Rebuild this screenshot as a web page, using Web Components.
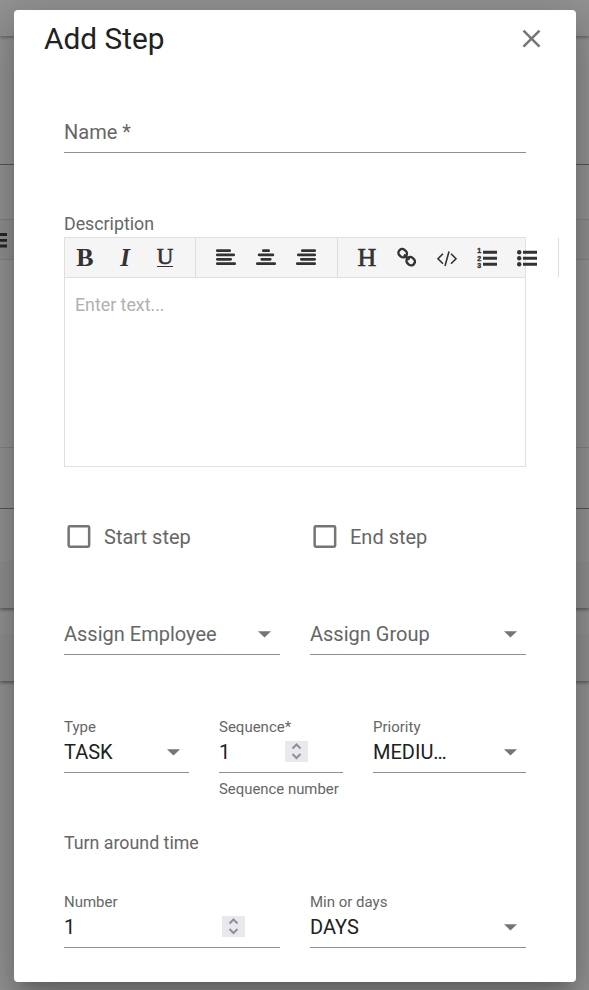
<!DOCTYPE html>
<html lang="en">
<head>
<meta charset="utf-8">
<title>Add Step</title>
<style>
  body {
    margin: 0;
    height: 990px;
    overflow: hidden;
    background: #939393;
    font-family: Roboto, "Liberation Sans", sans-serif;
    color: #212121;
  }
</style>
</head>
<body>
<page-backdrop></page-backdrop>
<step-dialog heading="Add Step">
  <form-field class="name" placeholder="Name *"></form-field>
  <text-editor label="Description" placeholder="Enter text..."></text-editor>
  <form-row class="checks">
    <check-box>Start step</check-box>
    <check-box>End step</check-box>
  </form-row>
  <form-row class="assign">
    <form-field placeholder="Assign Employee" control="select"></form-field>
    <form-field placeholder="Assign Group" control="select"></form-field>
  </form-row>
  <form-row class="details" columns="125px 124px 153px">
    <form-field label="Type" value="TASK" control="select"></form-field>
    <form-field label="Sequence*" value="1" control="number" hint="Sequence number"></form-field>
    <form-field label="Priority" value="MEDIU…" control="select"></form-field>
  </form-row>
  <section-label>Turn around time</section-label>
  <form-row class="duration">
    <form-field label="Number" value="1" control="number"></form-field>
    <form-field label="Min or days" value="DAYS" control="select"></form-field>
  </form-row>
</step-dialog>

<script>
class PageBackdrop extends HTMLElement {
    constructor() {
        super();
        this.attachShadow({ mode: 'open' });
        this.shadowRoot.innerHTML = `
        <style>
          :host { display: flex; flex-direction: column; height: 990px; }
          div { box-sizing: border-box; flex: none; }
          .bar { height: 36px; background: #929292; box-shadow: 0 1px 4px rgba(0,0,0,.4); }
          .top { height: 129px; border-bottom: 1px solid #555; }
          .gap { height: 54px; }
          .tools { height: 41px; background: #8f8f8f; border: solid #828282; border-width: 1px 0; }
          .tools svg { display: block; margin-top: 13px; }
          .area { height: 188px; border-bottom: 1px solid #828282; }
          .line { height: 61px; border-bottom: 1px solid #555; }
          .panel { background: #8f8f8f; box-shadow: 0 2px 3px rgba(0,0,0,.35); clip-path: inset(0 0 -6px 0); }
        </style>
        <div class="bar"></div>
        <div class="top"></div>
        <div class="gap"></div>
        <div class="tools">
          <svg width="7" height="15"><path d="M0 1.500h7M0 7.300h7M0 13h7" stroke="#262626" stroke-width="2.800"/></svg>
        </div>
        <div class="area"></div>
        <div class="line"></div>
        <div class="panel" style="height:47px;margin-top:52px"></div>
        <div class="panel" style="height:47px;margin-top:26px"></div>
      `;
    }
}

class StepDialog extends HTMLElement {
    constructor() {
        super();
        this.attachShadow({ mode: 'open' });
        this.shadowRoot.innerHTML = `
        <style>
          :host {
            position: absolute;
            left: 14px;
            top: 10px;
            width: 562px;
            height: 972px;
            box-sizing: border-box;
            background: #fff;
            border-radius: 4px;
            box-shadow: 0 11px 15px -7px rgba(0,0,0,.2),
                        0 24px 38px 3px rgba(0,0,0,.14),
                        0 9px 46px 8px rgba(0,0,0,.12);
          }
          header {
            display: flex;
            align-items: center;
            justify-content: space-between;
            height: 58px;
            padding: 0 35px 0 30px;
          }
          h1 { margin: 0; font-size: 29.8px; line-height: 40px; font-weight: 400; }
          main { display: flex; flex-direction: column; padding: 50px 50px 0; }
          ::slotted(text-editor) { margin-top: 59px; }
          ::slotted(.checks) { margin-top: 57px; }
          ::slotted(.assign) { margin-top: 70px; }
          ::slotted(.details) { margin-top: 63px; }
          ::slotted(section-label) { margin-top: 33px; }
          ::slotted(.duration) { margin-top: 38px; }
        </style>
        <header>
          <h1></h1>
          <svg width="20" height="20" viewBox="0 0 20 20"><path d="M2.500 1.700l16 16M18.500 1.700l-16 16" stroke="#757575" stroke-width="2.500"/></svg>
        </header>
        <main><slot></slot></main>
      `;
    }

    connectedCallback() {
        this.shadowRoot.querySelector('h1').textContent = this.getAttribute('heading');
    }
}

class FormRow extends HTMLElement {
    constructor() {
        super();
        this.attachShadow({ mode: 'open' });
        this.shadowRoot.innerHTML = `
        <style>
          :host {
            display: grid;
            grid-template-columns: var(--columns, 216px 216px);
            column-gap: 30px;
            align-items: start;
          }
        </style>
        <slot></slot>
      `;
    }

    connectedCallback() {
        const columns = this.getAttribute('columns');
        if (columns) this.style.setProperty('--columns', columns);
    }
}

class FormField extends HTMLElement {
    constructor() {
        super();
        this.attachShadow({ mode: 'open' });
    }

    connectedCallback() {
        const label = this.getAttribute('label');
        const value = this.getAttribute('value');
        const hint = this.getAttribute('hint');
        const controls = {
            select: '<svg class="arrow" width="13" height="8"><path d="M0 1.200h13L6.500 7.600z" fill="#757575"/></svg>',
            number: `<svg class="spin" width="23" height="21">
              <path d="M7.500 7.500l4-4 4 4M7.500 13l4 4 4-4" fill="none" stroke="#908f9c" stroke-width="2"/></svg>`
        };

        this.shadowRoot.innerHTML = `
        <style>
          :host { display: block; }
          .label, .hint { font-size: 15px; line-height: 18px; color: #666; white-space: nowrap; }
          .label { margin-bottom: 2px; }
          .hint { margin-top: 7px; font-size: 14.9px; }
          .control {
            display: flex;
            align-items: center;
            justify-content: space-between;
            height: 28px;
            padding-bottom: 6px;
            border-bottom: 1px solid #8f8f8f;
            font-size: 20px;
            line-height: 28px;
            white-space: nowrap;
          }
          .placeholder { color: #666; }
          .arrow { margin-right: 9px; }
          .spin { margin: 0 35px 1px 0; background: #e9e8ed; }
        </style>
        ${label ? `<div class="label">${label}</div>` : ''}
        <div class="control">
          <span class="${value ? 'value' : 'placeholder'}">${value || this.getAttribute('placeholder')}</span>
          ${controls[this.getAttribute('control')] || ''}
        </div>
        ${hint ? `<div class="hint">${hint}</div>` : ''}
      `;
    }
}

class CheckBox extends HTMLElement {
    constructor() {
        super();
        this.attachShadow({ mode: 'open' });
        this.shadowRoot.innerHTML = `
        <style>
          :host {
            display: flex;
            align-items: center;
            gap: 13px;
            height: 26px;
            padding-left: 3px;
            font-size: 20px;
            color: #666;
          }
          svg { margin-bottom: 1px; }
        </style>
        <svg width="24" height="23"><rect x="1.650" y="1.250" width="20.500" height="20.500" rx="1.200" fill="none" stroke="#757575" stroke-width="2.500"/></svg>
        <slot></slot>
      `;
    }
}

class SectionLabel extends HTMLElement {
    constructor() {
        super();
        this.attachShadow({ mode: 'open' });
        this.shadowRoot.innerHTML = `
        <style>
          :host { display: block; font-size: 17.8px; line-height: 24px; color: #666; }
        </style>
        <slot></slot>
      `;
    }
}

class TextEditor extends HTMLElement {
    constructor() {
        super();
        this.attachShadow({ mode: 'open' });
        this.shadowRoot.innerHTML = `
        <style>
          :host { display: block; }
          .label { font-size: 17.8px; line-height: 24px; color: #666; margin-bottom: 1px; }
          .editor { box-sizing: border-box; height: 230px; border: 1px solid #e0e0e0; }
          /* the last group runs past the right border of the bar */
          .bar { display: flex; height: 39px; background: #f5f5f5; border-bottom: 1px solid #e0e0e0; }
          .group { display: flex; flex: none; border-right: 1px solid #ddd; }
          .group:nth-child(1) { padding-right: 10px; }
          .group:nth-child(2) { padding: 0 11px 0 10px; }
          .group:nth-child(3) { padding: 0 11px 0 9px; }
          .group > * {
            display: flex;
            align-items: center;
            justify-content: center;
            width: 40px;
            height: 40px;
            flex: none;
          }
          b, em, u, strong { font: 26px/40px "Liberation Serif", serif; color: #333; text-decoration: none; }
          b { font-weight: 700; }
          em { font-size: 25px; font-weight: 700; font-style: italic; }
          strong { -webkit-text-stroke: .7px #333; }
          u { font-size: 23px; -webkit-text-stroke: .6px #333; }
          u span { height: 17px; line-height: 15px; border-bottom: 1.5px solid #333; }
          svg { fill: none; stroke: #333; overflow: visible; }
          .text { padding: 14px 10px; font-size: 17.8px; line-height: 26px; color: #b0b0b0; }
        </style>
        <div class="label"></div>
        <div class="editor">
          <div class="bar">
            <div class="group"><b>B</b><em>I</em><u><span>U</span></u></div>
            <div class="group">
              <div><svg width="20" height="20" stroke-width="2.700" stroke-linecap="round"><path d="M1.300 2.700h12.400M1.300 6.900h16.400M1.300 11.300h13.400M1.300 15.700h17.400"/></svg></div>
              <div><svg width="20" height="20" stroke-width="2.700" stroke-linecap="round"><path d="M7.300 2.700h5.400M3.100 6.900h13.800M5.700 11.300h8.600M1.300 15.700h17.400"/></svg></div>
              <div><svg width="20" height="20" stroke-width="2.700" stroke-linecap="round"><path d="M6.300 2.700h12.400M2.300 6.900h16.400M5.300 11.300h13.400M1.300 15.700h17.400"/></svg></div>
            </div>
            <div class="group">
              <strong>H</strong>
              <div><svg width="20" height="20" stroke-width="2.400">
                <rect x="1.400" y="1.500" width="8.600" height="7.400" rx="3.500" transform="rotate(40 5.700 5.200)"/>
                <rect x="9.400" y="9.500" width="8.600" height="7.400" rx="3.500" transform="rotate(40 13.700 13.200)"/>
                <path d="M7 6.700l5.500 5"/>
              </svg></div>
              <div><svg width="20" height="20" stroke-width="1.600"><path d="M6 5.700L1 10.700l5 5M14 5.700l5 5-5 5M12 3.500L8 18"/></svg></div>
              <div><svg width="20" height="20" stroke-width="2.900">
                <path d="M6 4.200h14M6 10.200h14M6 16.200h14"/>
                <g fill="#333" stroke="#333" stroke-width=".4" font-family="Liberation Sans" font-weight="700" font-size="7">
                  <text x=".2" y="4.700">1</text><text x=".2" y="12.500">2</text><text x=".2" y="20.300">3</text>
                </g>
              </svg></div>
              <div><svg width="20" height="20" stroke-width="2.900">
                <path d="M6 4.200h14M6 10.200h14M6 16.200h14"/>
                <g fill="#333" stroke="none"><circle cx="2.200" cy="4.200" r="2.200"/><circle cx="2.200" cy="10.200" r="2.200"/><circle cx="2.200" cy="16.200" r="2.200"/></g>
              </svg></div>
            </div>
          </div>
          <div class="text"></div>
        </div>
      `;
    }

    connectedCallback() {
        this.shadowRoot.querySelector('.label').textContent = this.getAttribute('label');
        this.shadowRoot.querySelector('.text').textContent = this.getAttribute('placeholder');
    }
}

customElements.define('page-backdrop', PageBackdrop);
customElements.define('step-dialog', StepDialog);
customElements.define('form-row', FormRow);
customElements.define('form-field', FormField);
customElements.define('check-box', CheckBox);
customElements.define('section-label', SectionLabel);
customElements.define('text-editor', TextEditor);
</script>
</body>
</html>
